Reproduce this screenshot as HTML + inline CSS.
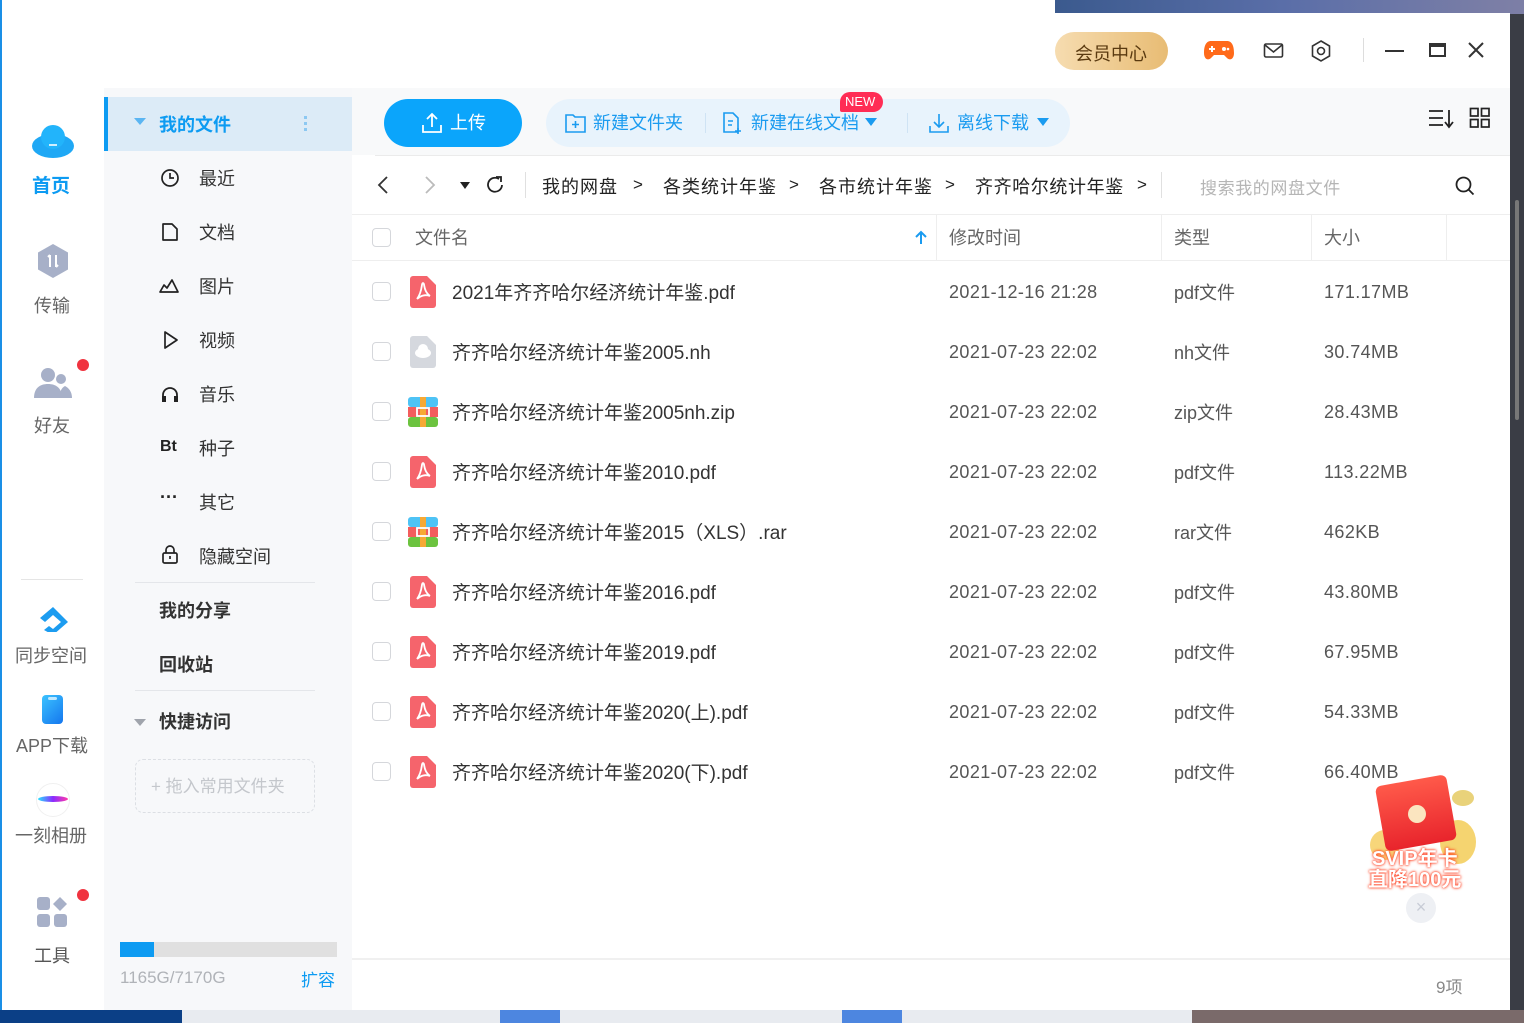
<!DOCTYPE html>
<html><head><meta charset="utf-8"><style>
*{margin:0;padding:0;box-sizing:border-box}
body{width:1524px;height:1023px;overflow:hidden;position:relative;background:#3a3d45;font-family:"Liberation Sans","Noto Sans CJK SC",sans-serif;color:#333}
.a{position:absolute}
.t{position:absolute;white-space:nowrap}
</style></head><body>
<div class="a" style="left:1055px;top:0;width:469px;height:14px;background:linear-gradient(90deg,#3b5a8e,#5a6ea8,#7d7fa6)"></div>
<div class="a" style="left:1510px;top:14px;width:14px;height:1000px;background:#3a3d45"></div>
<div class="a" style="left:0;top:1010px;width:1524px;height:13px;background:#e8ebf0"></div>
<div class="a" style="left:0;top:1010px;width:182px;height:13px;background:#0b3f86"></div>
<div class="a" style="left:500px;top:1010px;width:60px;height:13px;background:#4d86e0"></div>
<div class="a" style="left:842px;top:1010px;width:60px;height:13px;background:#4d86e0"></div>
<div class="a" style="left:1192px;top:1010px;width:332px;height:13px;background:#7a6a6a"></div>
<div class="a" style="left:0;top:0;width:1510px;height:1010px;background:#fff;border-left:2px solid #1a8fe6"></div>
<div class="a" style="left:1055px;top:0;width:455px;height:13px;background:linear-gradient(90deg,#3b5a8e,#5a6ea8,#7d7fa6)"></div>
<!-- header right -->
<div class="a" style="left:1055px;top:32px;width:113px;height:38px;border-radius:19px;background:linear-gradient(90deg,#f6dcb0,#e8bc74)"></div>
<div class="t" style="left:1075px;top:40px;font-size:18px;color:#5a3a10">会员中心</div>
<svg class="a" style="left:1203px;top:38px" width="32" height="26" viewBox="0 0 32 26"><path d="M8 3h16c5 0 7 5 7 12 0 6-4 8-7 5l-3-3H11l-3 3c-3 3-7 1-7-5C1 8 3 3 8 3z" fill="#ff6a1a"/><path d="M6 11h6M9 8v6" stroke="#fff" stroke-width="2"/><circle cx="21" cy="11" r="2" fill="#fff"/><circle cx="25" cy="11" r="1.3" fill="#fff"/></svg>
<svg class="a" style="left:1263px;top:42px" width="22" height="18"><rect x="1.5" y="2" width="18" height="13" rx="1.5" fill="none" stroke="#333" stroke-width="1.6"/><path d="M2 3l8.5 7 8.5-7" fill="none" stroke="#333" stroke-width="1.6"/></svg>
<svg class="a" style="left:1310px;top:39px" width="22" height="24"><path d="M11 2l8.5 5v10L11 22 2.5 17V7z" fill="none" stroke="#333" stroke-width="1.6"/><circle cx="11" cy="12" r="3.5" fill="none" stroke="#333" stroke-width="1.6"/></svg>
<div class="a" style="left:1363px;top:38px;width:1px;height:24px;background:#ddd"></div>
<div class="a" style="left:1385px;top:50px;width:19px;height:2px;background:#333"></div>
<div class="a" style="left:1429px;top:43px;width:17px;height:14px;border:2px solid #333;border-top-width:4px"></div>
<svg class="a" style="left:1467px;top:41px" width="18" height="18"><path d="M2 2l14 14M16 2L2 16" stroke="#333" stroke-width="2"/></svg>
<!-- left nav -->
<svg class="a" style="left:30px;top:120px" width="46" height="40"><ellipse cx="23" cy="26" rx="21" ry="12" fill="#1fa8f5"/><circle cx="23" cy="17" r="12" fill="#22b4fb"/><rect x="19" y="24" width="8" height="2" fill="#cfeefe"/></svg>
<div class="t" style="left:32px;top:171px;font-size:19px;font-weight:bold;color:#0d9bf2">首页</div>
<svg class="a" style="left:35px;top:243px" width="36" height="36"><path d="M18 1l15 8.5v17L18 35 3 26.5v-17z" fill="#a7b0c8"/><path d="M15 12v12M21 12v12M13 14l2-2 M23 22l-2 2" stroke="#fff" stroke-width="2"/></svg>
<div class="t" style="left:34px;top:292px;font-size:18px;color:#666">传输</div>
<svg class="a" style="left:34px;top:366px" width="40" height="34"><circle cx="14" cy="9" r="7" fill="#a7b0c8"/><path d="M0 32c0-10 6-14 14-14s14 4 14 14z" fill="#a7b0c8"/><circle cx="27" cy="13" r="5" fill="#a7b0c8"/><path d="M25 32c1-6 2-10 6-12 4 2 7 6 7 12z" fill="#a7b0c8"/></svg>
<div class="a" style="left:77px;top:359px;width:12px;height:12px;border-radius:50%;background:#f0333f"></div>
<div class="t" style="left:34px;top:412px;font-size:18px;color:#666">好友</div>
<div class="a" style="left:21px;top:579px;width:62px;height:1px;background:#e5e5e5"></div>
<svg class="a" style="left:37px;top:606px" width="32" height="26"><path d="M16 1L3 12l5 4 8-7 8 7-8 7-4-3-5 4 9 5 15-13z" fill="#1c9cf0"/></svg>
<div class="t" style="left:15px;top:642px;font-size:18px;color:#666">同步空间</div>
<div class="a" style="left:42px;top:695px;width:21px;height:29px;border-radius:4px;background:linear-gradient(135deg,#3cc3ff,#1476ee)"></div>
<div class="a" style="left:48px;top:697px;width:9px;height:3px;background:#bfe8ff;border-radius:2px"></div>
<div class="t" style="left:16px;top:732px;font-size:18px;color:#666">APP下载</div>
<div class="a" style="left:36px;top:783px;width:34px;height:34px;border-radius:50%;border:1px solid #f0f0f0"></div>
<div class="a" style="left:38px;top:796px;width:30px;height:6px;border-radius:50%;background:linear-gradient(90deg,#28e0ff,#8a2bff,#ff3aa8)"></div>
<div class="t" style="left:15px;top:822px;font-size:18px;color:#666">一刻相册</div>
<svg class="a" style="left:36px;top:896px" width="34" height="34"><rect x="1" y="1" width="13" height="13" rx="3" fill="#a7b0c8"/><rect x="1" y="18" width="13" height="13" rx="3" fill="#a7b0c8"/><rect x="18" y="18" width="13" height="13" rx="3" fill="#a7b0c8"/><path d="M24 1l7 7-7 7-7-7z" fill="#a7b0c8"/></svg>
<div class="a" style="left:77px;top:889px;width:12px;height:12px;border-radius:50%;background:#f0333f"></div>
<div class="t" style="left:34px;top:942px;font-size:18px;color:#555">工具</div>
<!-- second panel -->
<div class="a" style="left:104px;top:88px;width:248px;height:922px;background:#f7f8fa"></div>
<div class="a" style="left:104px;top:97px;width:248px;height:54px;background:#dcebf7"></div>
<div class="a" style="left:104px;top:97px;width:4px;height:54px;background:#0d9bf2"></div>
<div class="a" style="left:134px;top:118px;border:6px solid transparent;border-top:7px solid #5bb5f2;border-bottom:0"></div>
<div class="t" style="left:159px;top:111px;font-size:18px;font-weight:bold;color:#0d9bf2">我的文件</div>
<div class="a" style="left:304px;top:116px;width:3px;height:3px;background:#8cc8f2;box-shadow:0 6px #8cc8f2,0 12px #8cc8f2"></div>
<svg class="a" style="left:160px;top:168px" width="20" height="20"><circle cx="10" cy="10" r="8" fill="none" stroke="#222" stroke-width="1.7"/><path d="M10 5v5h4" fill="none" stroke="#222" stroke-width="1.7"/></svg>
<div class="t" style="left:199px;top:165px;font-size:18px;color:#333">最近</div>
<svg class="a" style="left:161px;top:222px" width="18" height="20"><path d="M2 2h9l5 5v11H2z" fill="none" stroke="#222" stroke-width="1.7" stroke-linejoin="round"/></svg>
<div class="t" style="left:199px;top:219px;font-size:18px;color:#333">文档</div>
<svg class="a" style="left:158px;top:277px" width="22" height="18"><path d="M2 15l4-7 3 3 5-8 6 12z" fill="none" stroke="#222" stroke-width="1.7" stroke-linejoin="round"/></svg>
<div class="t" style="left:199px;top:273px;font-size:18px;color:#333">图片</div>
<svg class="a" style="left:162px;top:330px" width="18" height="20"><path d="M3 2l12 8-12 8z" fill="none" stroke="#222" stroke-width="1.7" stroke-linejoin="round"/></svg>
<div class="t" style="left:199px;top:327px;font-size:18px;color:#333">视频</div>
<svg class="a" style="left:160px;top:385px" width="20" height="18"><path d="M3 15V10a7 7 0 0114 0v5" fill="none" stroke="#222" stroke-width="1.8"/><rect x="2" y="11" width="4" height="6" fill="#222"/><rect x="14" y="11" width="4" height="6" fill="#222"/></svg>
<div class="t" style="left:199px;top:381px;font-size:18px;color:#333">音乐</div>
<div class="t" style="left:160px;top:438px;font-size:16px;font-weight:bold;color:#222">Bt</div>
<div class="t" style="left:199px;top:435px;font-size:18px;color:#333">种子</div>
<div class="t" style="left:160px;top:487px;font-size:18px;font-weight:bold;color:#222">···</div>
<div class="t" style="left:199px;top:489px;font-size:18px;color:#333">其它</div>
<svg class="a" style="left:161px;top:545px" width="18" height="20"><rect x="2" y="8" width="14" height="10" rx="1.5" fill="none" stroke="#222" stroke-width="1.7"/><path d="M5 8V5a4 4 0 018 0v3" fill="none" stroke="#222" stroke-width="1.7"/><path d="M9 11v3" stroke="#222" stroke-width="1.7"/></svg>
<div class="t" style="left:199px;top:543px;font-size:18px;color:#333">隐藏空间</div>
<div class="a" style="left:135px;top:582px;width:180px;height:1px;background:#e4e6ea"></div>
<div class="t" style="left:159px;top:597px;font-size:18px;font-weight:bold;color:#333">我的分享</div>
<div class="t" style="left:159px;top:651px;font-size:18px;font-weight:bold;color:#333">回收站</div>
<div class="a" style="left:135px;top:690px;width:180px;height:1px;background:#e4e6ea"></div>
<div class="a" style="left:134px;top:719px;border:6px solid transparent;border-top:7px solid #a0a4ac;border-bottom:0"></div>
<div class="t" style="left:159px;top:708px;font-size:18px;font-weight:bold;color:#333">快捷访问</div>
<div class="a" style="left:135px;top:759px;width:180px;height:54px;border:1.5px dashed #dcdfe4;border-radius:8px"></div>
<div class="t" style="left:151px;top:772px;font-size:17px;color:#c4c7cc">+ 拖入常用文件夹</div>
<div class="a" style="left:120px;top:942px;width:217px;height:15px;background:#e0e0e0"></div>
<div class="a" style="left:120px;top:942px;width:34px;height:15px;background:#0d9bf2"></div>
<div class="t" style="left:120px;top:968px;font-size:17px;color:#b0b3b8">1165G/7170G</div>
<div class="t" style="left:301px;top:966px;font-size:17px;color:#0d9bf2">扩容</div>
<!-- toolbar -->
<div class="a" style="left:352px;top:88px;width:1158px;height:67px;background:#f8f9fa"></div>
<div class="a" style="left:384px;top:99px;width:138px;height:48px;border-radius:24px;background:#0ba5fb"></div>
<svg class="a" style="left:420px;top:111px" width="24" height="24"><path d="M12 16V3M7 8l5-5 5 5M3 14v7h18v-7" fill="none" stroke="#fff" stroke-width="1.8"/></svg>
<div class="t" style="left:450px;top:109px;font-size:18px;color:#fff">上传</div>
<div class="a" style="left:546px;top:99px;width:524px;height:48px;border-radius:24px;background:#e8f3fc"></div>
<svg class="a" style="left:564px;top:112px" width="24" height="22"><path d="M2 3h7l2 2h10v15H2z" fill="none" stroke="#1a9bf0" stroke-width="1.6"/><path d="M11.5 9v7M8 12.5h7" stroke="#1a9bf0" stroke-width="1.6"/></svg>
<div class="t" style="left:593px;top:109px;font-size:18px;color:#1a9bf0">新建文件夹</div>
<div class="a" style="left:705px;top:113px;width:1px;height:20px;background:#cfe3f4"></div>
<svg class="a" style="left:722px;top:111px" width="22" height="24"><path d="M2 2h9l5 5v14H2z" fill="none" stroke="#1a9bf0" stroke-width="1.6"/><path d="M6 10h5M6 14h4M16 17v6M13 20h6" stroke="#1a9bf0" stroke-width="1.6"/></svg>
<div class="t" style="left:751px;top:109px;font-size:18px;color:#1a9bf0">新建在线文档</div>
<div class="a" style="left:865px;top:118px;border:6px solid transparent;border-top:8px solid #1a9bf0;border-bottom:0"></div>
<div class="a" style="left:840px;top:92px;width:43px;height:20px;border-radius:10px 10px 10px 2px;background:#ff2d55"></div>
<div class="t" style="left:845px;top:94px;font-size:13px;color:#fff">NEW</div>
<div class="a" style="left:907px;top:113px;width:1px;height:20px;background:#cfe3f4"></div>
<svg class="a" style="left:927px;top:111px" width="24" height="24"><path d="M12 3v13M7 11l5 5 5-5M3 15v6h18v-6" fill="none" stroke="#1a9bf0" stroke-width="1.6"/></svg>
<div class="t" style="left:957px;top:109px;font-size:18px;color:#1a9bf0">离线下载</div>
<div class="a" style="left:1037px;top:118px;border:6px solid transparent;border-top:8px solid #1a9bf0;border-bottom:0"></div>
<svg class="a" style="left:1428px;top:108px" width="28" height="22"><path d="M1 3h14M1 10h14M1 17h14M21 2v16M17 14l4 5 4-5" fill="none" stroke="#222" stroke-width="1.8"/></svg>
<svg class="a" style="left:1469px;top:107px" width="22" height="22"><rect x="1.5" y="1.5" width="7.5" height="7.5" fill="none" stroke="#222" stroke-width="1.7"/><rect x="12.5" y="1.5" width="7.5" height="7.5" fill="none" stroke="#222" stroke-width="1.7"/><rect x="1.5" y="12.5" width="7.5" height="7.5" fill="none" stroke="#222" stroke-width="1.7"/><rect x="12.5" y="12.5" width="7.5" height="7.5" fill="none" stroke="#222" stroke-width="1.7"/></svg>
<div class="a" style="left:375px;top:155px;width:1135px;height:1px;background:#ebebeb"></div>
<!-- breadcrumb -->
<svg class="a" style="left:376px;top:175px" width="14" height="20"><path d="M11 2L3 10l8 8" fill="none" stroke="#333" stroke-width="1.8"/></svg>
<svg class="a" style="left:423px;top:175px" width="14" height="20"><path d="M3 2l8 8-8 8" fill="none" stroke="#bbb" stroke-width="1.8"/></svg>
<div class="a" style="left:460px;top:182px;border:5px solid transparent;border-top:7px solid #222;border-bottom:0"></div>
<svg class="a" style="left:484px;top:174px" width="22" height="22"><path d="M18 11a7 7 0 11-3-6" fill="none" stroke="#222" stroke-width="1.8"/><path d="M12 3h5v5" fill="none" stroke="#222" stroke-width="1.8"/></svg>
<div class="a" style="left:525px;top:172px;width:1px;height:26px;background:#e0e0e0"></div>
<div class="t" style="left:542px;top:173px;font-size:18px;color:#222;letter-spacing:1px">我的网盘</div>
<div class="t" style="left:633px;top:175px;font-size:17px;color:#222">&gt;</div>
<div class="t" style="left:663px;top:173px;font-size:18px;color:#222;letter-spacing:1px">各类统计年鉴</div>
<div class="t" style="left:789px;top:175px;font-size:17px;color:#222">&gt;</div>
<div class="t" style="left:819px;top:173px;font-size:18px;color:#222;letter-spacing:1px">各市统计年鉴</div>
<div class="t" style="left:945px;top:175px;font-size:17px;color:#222">&gt;</div>
<div class="t" style="left:975px;top:173px;font-size:18px;color:#222;letter-spacing:0.6px">齐齐哈尔统计年鉴</div>
<div class="t" style="left:1137px;top:175px;font-size:17px;color:#222">&gt;</div>
<div class="a" style="left:1161px;top:172px;width:1px;height:26px;background:#e0e0e0"></div>
<div class="t" style="left:1200px;top:174px;font-size:17px;color:#b5b5b5;letter-spacing:0.6px">搜索我的网盘文件</div>
<svg class="a" style="left:1454px;top:175px" width="22" height="22"><circle cx="9.5" cy="9.5" r="7" fill="none" stroke="#222" stroke-width="1.8"/><path d="M14.5 14.5l5 5" stroke="#222" stroke-width="1.8"/></svg>
<!-- table header -->
<div class="a" style="left:352px;top:214px;width:1158px;height:1px;background:#eee"></div>
<div class="a" style="left:352px;top:260px;width:1158px;height:1px;background:#eee"></div>
<div class="a" style="left:372px;top:228px;width:19px;height:19px;border:1.5px solid #d5d7db;border-radius:4px"></div>
<div class="t" style="left:415px;top:224px;font-size:18px;color:#666">文件名</div>
<svg class="a" style="left:914px;top:229px" width="14" height="16"><path d="M7 15V3M2 8l5-5 5 5" fill="none" stroke="#1a9bf0" stroke-width="2"/></svg>
<div class="a" style="left:936px;top:214px;width:1px;height:46px;background:#eee"></div>
<div class="t" style="left:949px;top:224px;font-size:18px;color:#666">修改时间</div>
<div class="a" style="left:1161px;top:214px;width:1px;height:46px;background:#eee"></div>
<div class="t" style="left:1174px;top:224px;font-size:18px;color:#666">类型</div>
<div class="a" style="left:1311px;top:214px;width:1px;height:46px;background:#eee"></div>
<div class="t" style="left:1324px;top:224px;font-size:18px;color:#666">大小</div>
<div class="a" style="left:1446px;top:214px;width:1px;height:46px;background:#eee"></div>
<div id="rows"></div>
<script>
var R=[["pdf","2021年齐齐哈尔经济统计年鉴.pdf","2021-12-16 21:28","pdf文件","171.17MB"],
["nh","齐齐哈尔经济统计年鉴2005.nh","2021-07-23 22:02","nh文件","30.74MB"],
["zip","齐齐哈尔经济统计年鉴2005nh.zip","2021-07-23 22:02","zip文件","28.43MB"],
["pdf","齐齐哈尔经济统计年鉴2010.pdf","2021-07-23 22:02","pdf文件","113.22MB"],
["zip","齐齐哈尔经济统计年鉴2015（XLS）.rar","2021-07-23 22:02","rar文件","462KB"],
["pdf","齐齐哈尔经济统计年鉴2016.pdf","2021-07-23 22:02","pdf文件","43.80MB"],
["pdf","齐齐哈尔经济统计年鉴2019.pdf","2021-07-23 22:02","pdf文件","67.95MB"],
["pdf","齐齐哈尔经济统计年鉴2020(上).pdf","2021-07-23 22:02","pdf文件","54.33MB"],
["pdf","齐齐哈尔经济统计年鉴2020(下).pdf","2021-07-23 22:02","pdf文件","66.40MB"]];
var h="";
R.forEach(function(r,i){var y=292+i*60;var ic;
if(r[0]=="pdf")ic='<svg class="a" style="left:410px;top:'+(y-16)+'px" width="26" height="32"><path d="M3 0h14l9 9v20a3 3 0 01-3 3H3a3 3 0 01-3-3V3a3 3 0 013-3z" fill="#f5646c"/><path d="M13 7c-2 0 0 8 -6 16M13 7c2 0 0 8 7 13M7 23c3-3 8-5 13-3" fill="none" stroke="#fff" stroke-width="1.8"/></svg>';
else if(r[0]=="nh")ic='<svg class="a" style="left:410px;top:'+(y-16)+'px" width="26" height="32"><path d="M3 0h14l9 9v20a3 3 0 01-3 3H3a3 3 0 01-3-3V3a3 3 0 013-3z" fill="#d5d8de"/><ellipse cx="13" cy="17" rx="8" ry="5" fill="#fff"/><circle cx="13" cy="13" r="5" fill="#fff"/></svg>';
else ic='<svg class="a" style="left:408px;top:'+(y-15)+'px" width="30" height="30"><rect width="30" height="10" rx="3" fill="#4ec3f5"/><rect y="10" width="30" height="10" fill="#f35d5d"/><rect y="20" width="30" height="10" rx="3" fill="#6cc33f"/><rect x="12" width="6" height="30" fill="#f7a934"/><rect x="9" y="11" width="12" height="8" fill="none" stroke="#fff" stroke-width="1.8"/></svg>';
h+='<div class="a" style="left:372px;top:'+(y-10)+'px;width:19px;height:19px;border:1.5px solid #d5d7db;border-radius:4px"></div>'+ic+
'<div class="t" style="left:452px;top:'+(y-14)+'px;font-size:19px;color:#333">'+r[1]+'</div>'+
'<div class="t" style="left:949px;top:'+(y-10)+'px;font-size:18px;color:#555;letter-spacing:0.4px">'+r[2]+'</div>'+
'<div class="t" style="left:1174px;top:'+(y-13)+'px;font-size:18px;color:#555">'+r[3]+'</div>'+
'<div class="t" style="left:1324px;top:'+(y-10)+'px;font-size:18px;color:#555;letter-spacing:0.4px">'+r[4]+'</div>';});
document.getElementById("rows").innerHTML=h;
</script>
<!-- promo -->
<div class="a" style="left:1452px;top:790px;width:22px;height:16px;border-radius:50%;background:#e9d27a"></div>
<div class="a" style="left:1440px;top:820px;width:36px;height:44px;border-radius:50%;background:#f2c94c;opacity:.8"></div>
<div class="a" style="left:1370px;top:830px;width:30px;height:30px;border-radius:50%;background:#f4c542;opacity:.7"></div>
<div class="a" style="left:1380px;top:780px;width:72px;height:66px;background:linear-gradient(#ff5a4a,#e8242c);border-radius:6px;transform:rotate(-10deg)"></div>
<div class="a" style="left:1408px;top:805px;width:18px;height:18px;border-radius:50%;background:#fbe5c0"></div>
<div class="t" style="left:1372px;top:842px;font-size:20px;font-weight:bold;color:#fff;text-shadow:0 0 3px #ff4020,0 0 2px #ff4020">SVIP年卡</div>
<div class="t" style="left:1368px;top:863px;font-size:20px;font-weight:bold;color:#fff;text-shadow:0 0 3px #ff4020,0 0 2px #ff4020">直降100元</div>
<div class="a" style="left:1406px;top:893px;width:30px;height:30px;border-radius:50%;background:#eef0f4;color:#c8ccd6;font-size:18px;text-align:center;line-height:29px">×</div>
<div class="a" style="left:352px;top:958px;width:1158px;height:2px;background:#f0f0f0"></div>
<div class="t" style="left:1436px;top:973px;font-size:17px;color:#888">9项</div>
<div class="a" style="left:1515px;top:200px;width:4px;height:220px;background:#777;border-radius:2px"></div>
</body></html>
